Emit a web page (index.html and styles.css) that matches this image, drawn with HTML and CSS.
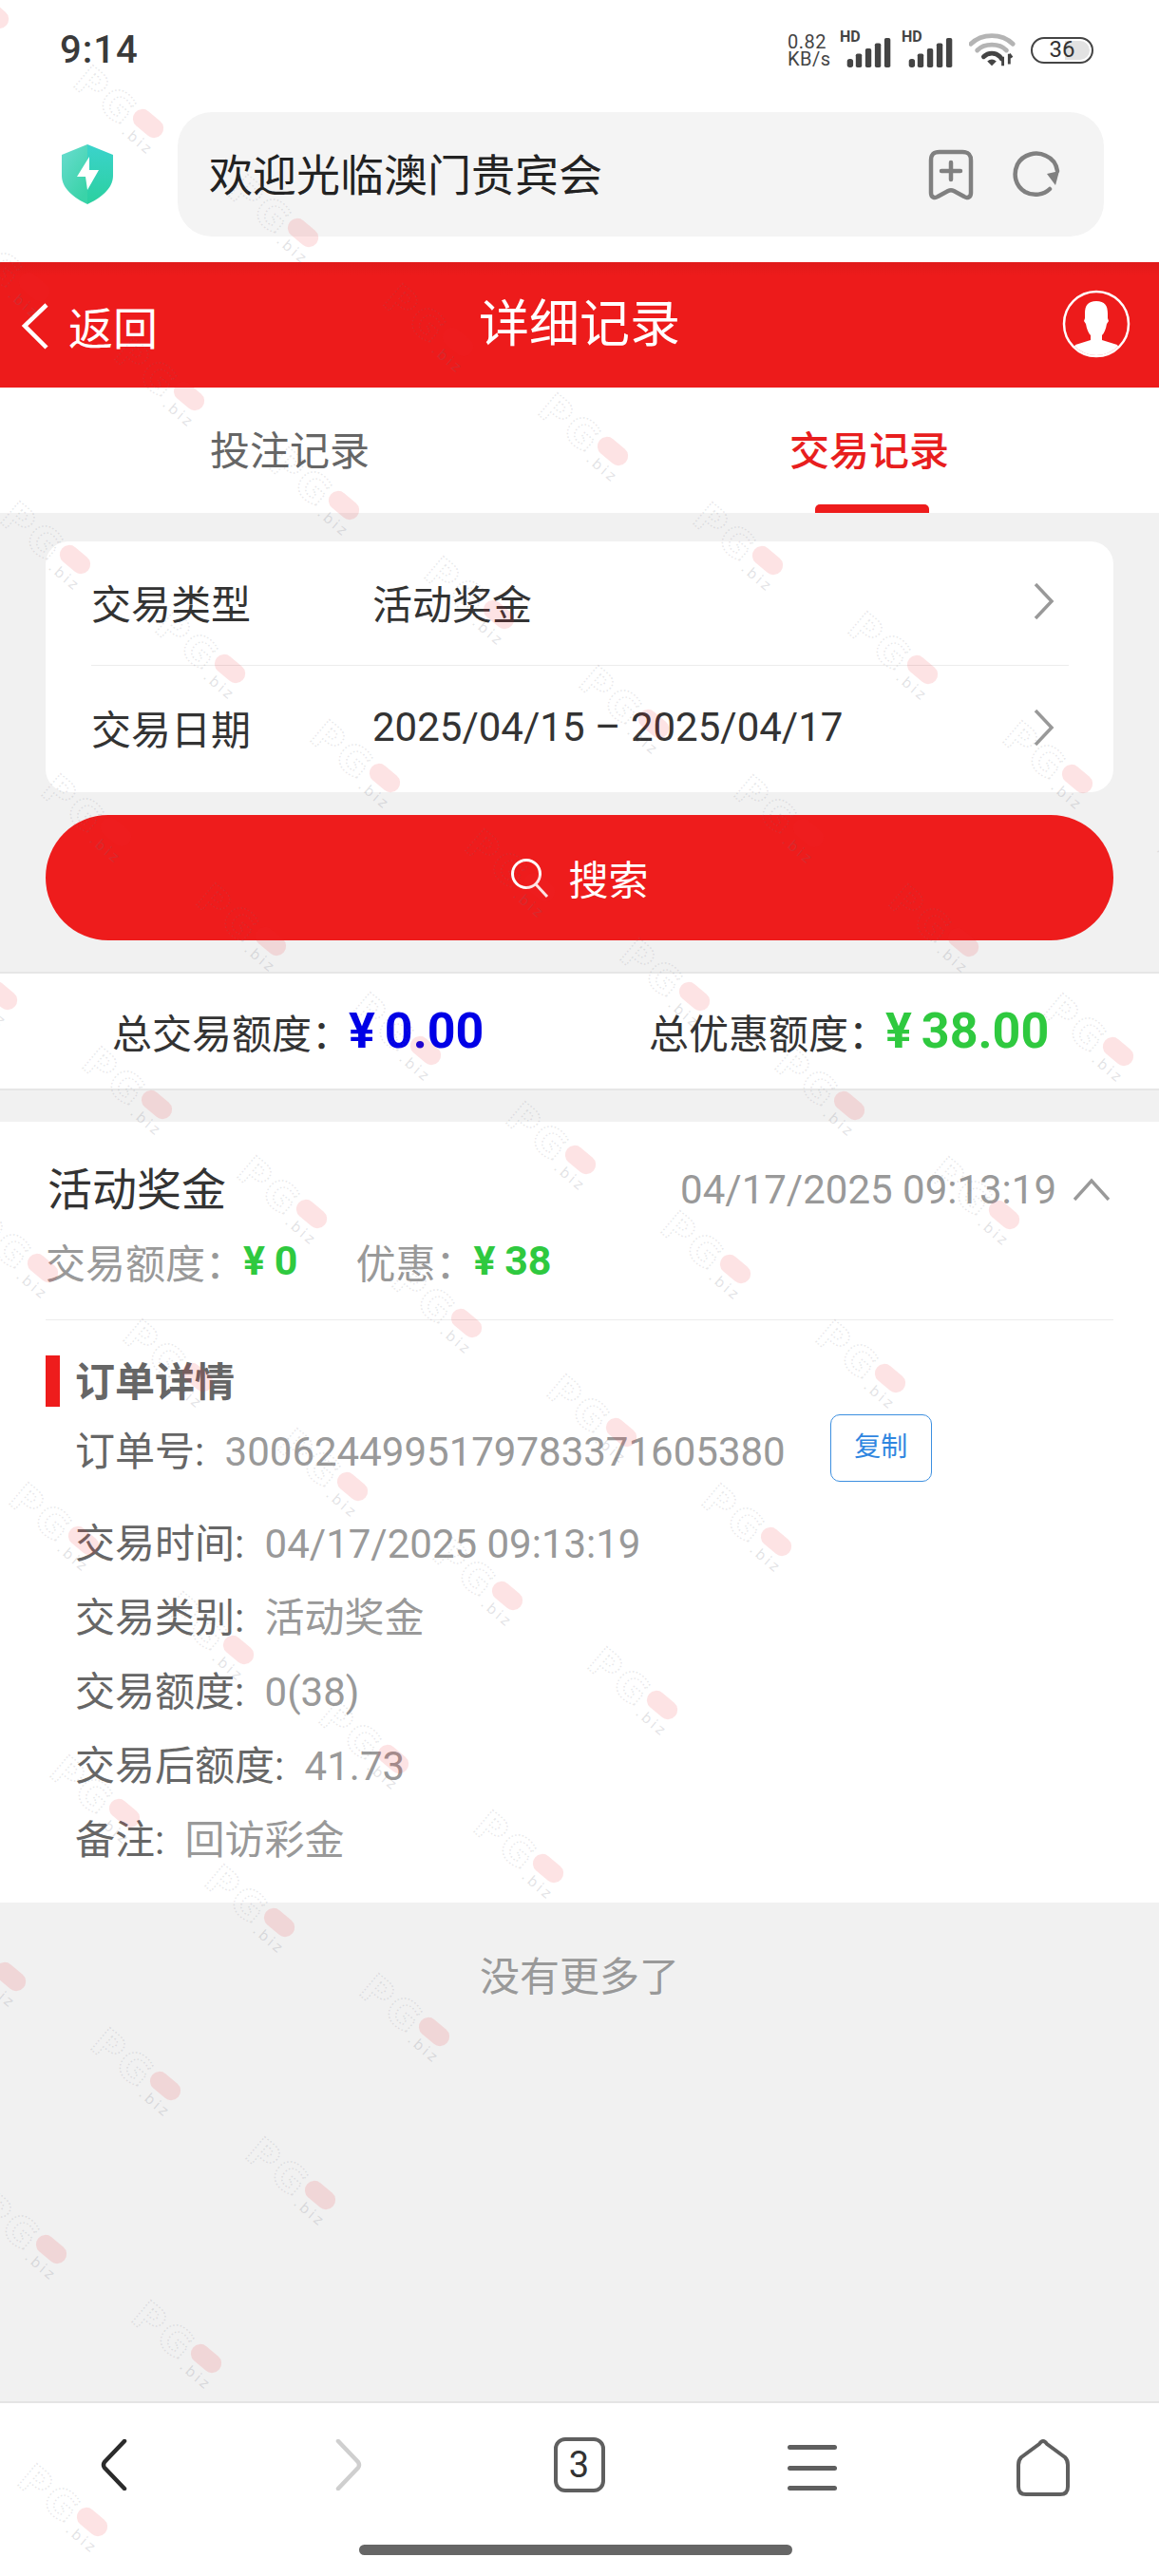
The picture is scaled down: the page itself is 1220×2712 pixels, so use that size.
FILE: index.html
```html
<!DOCTYPE html>
<html lang="zh-CN">
<head>
  <meta charset="UTF-8" />
  <meta name="viewport" content="width=device-width, initial-scale=1.0"/>
  <title>详细记录</title>
  <link rel="stylesheet" href="styles.css">
</head>
<body>
  <div class="screen">

    <!-- phone status bar -->
    <div class="statusbar">
      <span class="clock">9:14</span>
      <div class="status-icons">
        <span class="speed">0.82<br>KB/s</span>
        <div class="signal">
          <span class="hd">HD</span>
          <svg width="49" height="31" viewBox="0 0 50 34"><g fill="#444"><rect x="0" y="24" width="7" height="10" rx="3"/><rect x="10" y="18" width="7" height="16" rx="2"/><rect x="21" y="12" width="7" height="22" rx="2"/><rect x="32" y="6" width="7" height="28" rx="2"/><rect x="43" y="0" width="7" height="34" rx="2"/></g></svg>
        </div>
        <div class="signal">
          <span class="hd">HD</span>
          <svg width="49" height="31" viewBox="0 0 50 34"><g fill="#444"><rect x="0" y="24" width="7" height="10" rx="3"/><rect x="10" y="18" width="7" height="16" rx="2"/><rect x="21" y="12" width="7" height="22" rx="2"/><rect x="32" y="6" width="7" height="28" rx="2"/><rect x="43" y="0" width="7" height="34" rx="2"/></g></svg>
        </div>
        <svg class="wifi" width="50" height="38" viewBox="0 0 52 38">
          <g fill="none" stroke-linecap="round">
            <path d="M2 13 C14 1 36 1 48 13" stroke="#b4b4b4" stroke-width="5"/>
            <path d="M9 20 C17 12 33 12 41 20" stroke="#b4b4b4" stroke-width="5"/>
            <path d="M16 27 C21 22 29 22 34 27" stroke="#444" stroke-width="5"/>
          </g>
          <path d="M20 32 Q25 28 30 32 L25 37Z" fill="#444"/>
          <path d="M37 37 V27 M37 27 l-3 4 M44 24 V35 M44 24 l3 4" stroke="#444" stroke-width="3" fill="none"/>
        </svg>
        <div class="battery"><i class="battery-level"></i><span>36</span></div>
      </div>
    </div>

    <!-- browser address bar -->
    <div class="addressbar">
      <svg class="shield" width="54" height="63" viewBox="0 0 54 63">
        <defs>
          <linearGradient id="shieldL" x1="0" y1="0" x2="0.6" y2="1"><stop offset="0" stop-color="#6adcd0"/><stop offset="1" stop-color="#3ad3a8"/></linearGradient>
          <linearGradient id="shieldR" x1="0.5" y1="0" x2="0.5" y2="1"><stop offset="0" stop-color="#3bd3cc"/><stop offset="1" stop-color="#2bd09f"/></linearGradient>
        </defs>
        <path d="M27 0 L0 11 V33 C0 47 14 57 27 63Z" fill="url(#shieldL)"/>
        <path d="M27 0 L54 11 V33 C54 47 40 57 27 63Z" fill="url(#shieldR)"/>
        <path d="M29 13 L16 34 H25 L27 48 L39 27 H29Z" fill="#fff"/>
      </svg>
      <div class="url-pill">
        <span class="url-text">欢迎光临澳门贵宾会</span>
        <svg class="bookmark" width="48" height="54" viewBox="0 0 48 54" fill="none" stroke="#808080" stroke-width="4.5" stroke-linecap="round" stroke-linejoin="round">
          <path d="M3 12 C3 5 6 3 12 3 H36 C42 3 45 5 45 12 V46 C45 51 41 52 38 50 L27 44 C25 43 23 43 21 44 L10 50 C7 52 3 51 3 46Z"/>
          <path d="M24 14 V32 M14 23 H34"/>
        </svg>
        <svg class="refresh" width="50" height="50" viewBox="0 0 50 50" fill="none">
          <path d="M39 40 C33 46 22 48 13 43 C3 37 0 25 5 14 C11 3 25 0 35 5 C42 8 46 14 47 21" stroke="#808080" stroke-width="4.5" stroke-linecap="round"/>
          <path d="M36 24 L49 21 L45 36Z" fill="#808080"/>
        </svg>
      </div>
    </div>

    <!-- red title bar -->
    <header class="titlebar">
      <a class="back">
        <svg width="30" height="50" viewBox="0 0 30 50" fill="none" stroke="#fff" stroke-width="4.5"><path d="M27 3 L4 25 L27 48"/></svg>
        <span>返回</span>
      </a>
      <h1>详细记录</h1>
      <svg class="avatar" width="72" height="72" viewBox="0 0 72 72">
        <defs><clipPath id="avatarClip"><circle cx="36" cy="36" r="33"/></clipPath></defs>
        <circle cx="36" cy="36" r="34" fill="none" stroke="#fff" stroke-width="2.5"/>
        <path clip-path="url(#avatarClip)" fill="#fff" d="M36 12 C27 12 24 17 24 25 L24 30 L23 33 L25 36 C26 42 28 46 30 48 V53 L14 58 L6 72 H66 L58 58 L42 53 V48 C44 46 46 42 47 36 L49 33 L48 30 V25 C48 17 45 12 36 12Z"/>
      </svg>
    </header>

    <nav class="tabs">
      <a class="tab">投注记录</a>
      <a class="tab tab-on">交易记录</a>
    </nav>

    <main class="content">
      <section class="filter-card">
        <div class="filter-row">
          <span class="filter-label">交易类型</span>
          <span class="filter-value">活动奖金</span>
          <svg class="chev" width="22" height="38" viewBox="0 0 22 38" fill="none" stroke="#999" stroke-width="3.5"><path d="M2 1 L19 19 L2 37"/></svg>
        </div>
        <div class="filter-row">
          <span class="filter-label">交易日期</span>
          <span class="filter-value">2025/04/15 – 2025/04/17</span>
          <svg class="chev" width="22" height="38" viewBox="0 0 22 38" fill="none" stroke="#999" stroke-width="3.5"><path d="M2 1 L19 19 L2 37"/></svg>
        </div>
      </section>

      <button class="search-btn">
        <svg width="42" height="42" viewBox="0 0 42 42" fill="none" stroke="#fff" stroke-width="3"><circle cx="17" cy="17" r="14.5"/><path d="M27 28 L39 41"/></svg>
        <span>搜索</span>
      </button>

      <section class="summary">
        <div class="summary-item">总交易额度：<b class="blue">¥ 0.00</b></div>
        <div class="summary-item">总优惠额度：<b class="green">¥ 38.00</b></div>
      </section>

      <article class="record">
        <div class="record-head">
          <span class="record-name">活动奖金</span>
          <span class="record-date">04/17/2025 09:13:19</span>
          <svg width="38" height="24" viewBox="0 0 38 24" fill="none" stroke="#999" stroke-width="3.5"><path d="M1 23 L19 3 L37 23"/></svg>
        </div>
        <div class="record-amounts">
          <span>交易额度：<b class="green">¥ 0</b></span>
          <span>优惠：<b class="green">¥ 38</b></span>
        </div>
        <div class="record-line"></div>
        <h3 class="detail-title">订单详情</h3>
        <div class="detail-row detail-order">
          <span>订单号: <em>3006244995179783371605380</em></span>
          <a class="copy-btn">复制</a>
        </div>
        <div class="detail-row">交易时间: <em>04/17/2025 09:13:19</em></div>
        <div class="detail-row">交易类别: <em>活动奖金</em></div>
        <div class="detail-row">交易额度: <em>0(38)</em></div>
        <div class="detail-row">交易后额度: <em>41.73</em></div>
        <div class="detail-row">备注: <em>回访彩金</em></div>
      </article>

      <p class="no-more">没有更多了</p>
    </main>

    <!-- browser toolbar -->
    <footer class="toolbar">
      <div class="toolbar-icons">
        <svg width="30" height="54" viewBox="0 0 30 54" fill="none" stroke="#2b2b2b" stroke-width="4.5" stroke-linecap="round" stroke-linejoin="round"><path d="M26 2 L5 24 Q3 27 5 30 L26 52"/></svg>
        <svg class="forward" width="30" height="54" viewBox="0 0 30 54" fill="none" stroke="#cfcfcf" stroke-width="4.5" stroke-linecap="round" stroke-linejoin="round"><path d="M4 2 L25 24 Q27 27 25 30 L4 52"/></svg>
        <div class="tab-count">3</div>
        <div class="menu-lines"><i></i><i></i><i></i></div>
        <svg class="home" width="56" height="60" viewBox="0 0 56 60" fill="none" stroke="#5f5f5f" stroke-width="4" stroke-linejoin="round"><path d="M28 2 Q26 2 24 5 L5 19 Q2 22 2 27 V50 Q2 58 10 58 H46 Q54 58 54 50 V27 Q54 22 51 19 L32 5 Q30 2 28 2Z"/></svg>
      </div>
      <div class="home-handle"></div>
    </footer>

    <!-- repeated site stamp over the page, filled in by watermark.js -->
    <svg class="stamps" id="stamps" width="1220" height="2712" viewBox="0 0 1220 2712">
      <defs>
        <g id="stamp">
          <text class="stamp-pg" x="-88" y="21">PG</text>
          <rect class="stamp-pill" x="-18" y="-10" width="36" height="20" rx="10"/>
          <text class="stamp-biz" x="-16" y="26">.biz</text>
        </g>
      </defs>
    </svg>
  </div>
  <script src="watermark.js"></script>
</body>
</html>
```

FILE: styles.css
```css
html, body {
  margin: 0;
  background: #f1f1f1;
}
.screen {
  position: relative;
  width: 1220px;
  height: 2712px;
  overflow: hidden;
  display: flex;
  flex-direction: column;
  font-family: Roboto, "Noto Sans CJK SC", sans-serif;
  font-size: 42px;
  color: #333;
}
a { text-decoration: none; }
em { font-style: normal; }

/* status bar */
.statusbar {
  height: 104px;
  flex: none;
  background: #fff;
  display: flex;
  align-items: center;
  justify-content: space-between;
  padding: 0 69px 0 63px;
  box-sizing: border-box;
}
.clock {
  font-size: 40px;
  font-weight: 500;
  color: #3a3a3a;
  letter-spacing: 1px;
}
.status-icons {
  display: flex;
  align-items: flex-end;
  height: 38px;
}
.speed {
  width: 48px;
  font-size: 20px;
  line-height: 18px;
  color: #444;
  letter-spacing: 0.5px;
  margin-right: 13px;
}
.signal {
  position: relative;
  width: 49px;
  height: 38px;
  margin-right: 16px;
  display: flex;
  align-items: flex-end;
}
.hd {
  position: absolute;
  left: -6px;
  top: -1px;
  font-size: 16px;
  line-height: 14px;
  font-weight: 700;
  color: #444;
}
.wifi { margin-right: 15px; }
.battery {
  position: relative;
  width: 66px;
  height: 28px;
  box-sizing: border-box;
  border: 2.5px solid #444;
  border-radius: 14px;
  font-size: 24px;
  line-height: 23px;
  text-align: center;
  color: #333;
  overflow: hidden;
  margin-bottom: 4px;
}
.battery-level {
  position: absolute;
  right: 2px;
  top: 2px;
  bottom: 2px;
  width: 26px;
  background: #e2e2e2;
  border-radius: 0 10px 10px 0;
}
.battery span { position: relative; }

/* address bar */
.addressbar {
  height: 172px;
  flex: none;
  background: #fff;
  box-sizing: border-box;
  padding: 14px 58px 27px 65px;
  display: flex;
  align-items: center;
}
.shield { flex: none; margin-right: 68px; }
.url-pill {
  flex: 1;
  height: 131px;
  background: #f4f4f4;
  border-radius: 36px;
  display: flex;
  align-items: center;
  padding: 0 46px 0 33px;
}
.url-text {
  flex: 1;
  font-size: 46px;
  color: #222;
  padding-bottom: 5px;
}
.bookmark { margin-right: 41px; }

/* title bar */
.titlebar {
  position: relative;
  height: 132px;
  flex: none;
  background: linear-gradient(#e01a1a, #ed1b1b 14px);
  display: flex;
  align-items: center;
  justify-content: center;
  color: #fff;
}
.titlebar h1 {
  margin: 0;
  font-size: 53px;
  font-weight: 400;
  line-height: 128px;
}
.back {
  position: absolute;
  left: 22px;
  top: 32px;
  display: flex;
  align-items: center;
  gap: 20px;
  color: #fff;
  font-size: 47px;
}
.avatar {
  position: absolute;
  right: 30px;
  top: 29px;
}

/* tabs */
.tabs {
  height: 132px;
  flex: none;
  background: #fff;
  display: flex;
}
.tab {
  flex: 1;
  position: relative;
  text-align: center;
  line-height: 136px;
  color: #666;
}
.tab-on {
  color: #e81e1e;
  font-weight: 500;
}
.tab-on::after {
  content: '';
  position: absolute;
  left: 248px;
  bottom: 0;
  width: 120px;
  height: 9px;
  background: #ee1c1c;
  border-radius: 5px 5px 0 0;
}

.content {
  flex: 1;
  display: flex;
  flex-direction: column;
  padding-top: 30px;
  background: #f1f1f1;
}

/* filter card */
.filter-card {
  margin: 0 48px;
  background: #fff;
  border-radius: 24px;
  padding: 0 47px 0 48px;
}
.filter-row {
  height: 130px;
  box-sizing: border-box;
  padding-bottom: 4px;
  display: flex;
  align-items: center;
  color: #333;
}
.filter-row + .filter-row {
  height: 134px;
  border-top: 1px solid #ececec;
}
.filter-label { width: 296px; }
.filter-value { flex: 1; }
.chev { margin-right: 15px; }

.search-btn {
  margin: 24px 48px 0;
  height: 132px;
  padding-bottom: 2px;
  border: none;
  border-radius: 66px;
  background: #ee1c1c;
  color: #fff;
  font: inherit;
  display: flex;
  align-items: center;
  justify-content: center;
  gap: 19px;
}

/* totals */
.summary {
  margin-top: 33px;
  height: 125px;
  box-sizing: border-box;
  background: #fff;
  border-top: 2px solid #e6e6e6;
  border-bottom: 2px solid #e6e6e6;
  display: flex;
  align-items: center;
  padding: 0 0 0 118px;
  color: #333;
}
.summary-item { display: flex; align-items: center; }
.summary-item:first-child { width: 565px; }
.summary b {
  font-size: 52px;
  font-weight: 700;
  margin-left: -3px;
  word-spacing: -3px;
}
.blue { color: #0000e6; }
.green { color: #2fc93f; }

/* record */
.record {
  margin-top: 33px;
  height: 822px;
  box-sizing: border-box;
  background: #fff;
  padding: 0 48px;
}
.record-head {
  height: 142px;
  display: flex;
  align-items: center;
}
.record-name {
  flex: 1;
  font-size: 47px;
  margin-left: 2px;
  padding-bottom: 8px;
}
.record-date { color: #999; margin-right: 18px; }
.record-head svg { margin-right: 4px; }
.record-amounts {
  height: 64px;
  margin-top: -28px;
  display: flex;
  align-items: center;
  gap: 61px;
  color: #999;
}
.record-amounts span { display: flex; align-items: center; }
.record-amounts b {
  font-size: 43px;
  font-weight: 700;
  margin-left: -2px;
  word-spacing: -1px;
}
.record-line {
  height: 1px;
  margin-top: 30px;
  background: #ececec;
}
.detail-title {
  margin: 37px 0 0;
  height: 54px;
  border-left: 15px solid #ee1c1c;
  padding-left: 16px;
  font-size: 42px;
  font-weight: 700;
  line-height: 58px;
  color: #666;
}
.detail-row {
  height: 78px;
  line-height: 78px;
  padding-left: 31px;
  color: #666;
  white-space: nowrap;
}
.detail-row em { color: #999; margin-left: 11px; }
.detail-order {
  margin: 13px 0 23px;
  height: 70px;
  line-height: 70px;
  display: flex;
  align-items: center;
}
.copy-btn {
  margin-left: 47px;
  width: 105px;
  height: 69px;
  margin-top: -10px;
  border: 1.5px solid #3c8fe0;
  border-radius: 10px;
  font-size: 28px;
  line-height: 67px;
  text-align: center;
  color: #2f86e0;
}
.no-more {
  margin: 49px 0 0;
  text-align: center;
  line-height: 60px;
  color: #999;
}

/* browser toolbar */
.toolbar {
  height: 184px;
  flex: none;
  box-sizing: border-box;
  background: #fff;
  border-top: 2px solid #e4e4e4;
}
.toolbar-icons {
  height: 110px;
  margin-left: -3px;
  padding-top: 38px;
  box-sizing: border-box;
  display: grid;
  grid-template-columns: repeat(5, 245px);
  justify-items: center;
  align-items: start;
}
.forward { margin-left: 5px; }
.home { margin-right: 4px; }
.tab-count {
  width: 54px;
  height: 58px;
  margin-top: -2px;
  box-sizing: border-box;
  border: 4px solid #5f5f5f;
  border-radius: 12px;
  text-align: center;
  font-size: 38px;
  line-height: 50px;
  color: #333;
}
.menu-lines {
  width: 52px;
  height: 48px;
  margin-top: 6px;
  display: flex;
  flex-direction: column;
  justify-content: space-between;
}
.menu-lines i {
  height: 5px;
  background: #5f5f5f;
  border-radius: 3px;
}
.home-handle {
  width: 456px;
  height: 11px;
  margin: 39px 0 0 378px;
  background: #666;
  border-radius: 6px;
}

/* stamps lying over everything */
.stamps {
  position: absolute;
  left: 0;
  top: 0;
  pointer-events: none;
}
.stamp-pg {
  font-family: "DejaVu Sans", sans-serif;
  font-size: 42px;
  font-weight: 700;
  letter-spacing: 3px;
  fill: none;
  stroke: rgba(110, 110, 125, 0.17);
  stroke-width: 1.6;
  stroke-dasharray: 1.6 2.2;
}
.stamp-pill { fill: rgba(238, 40, 50, 0.13); }
.stamp-biz {
  font-family: "DejaVu Sans", sans-serif;
  font-size: 15px;
  fill: rgba(110, 110, 125, 0.2);
  letter-spacing: 3px;
}
```

FILE: watermark.js
```js
// lay the stamp out on its slanted lattice; the band stops at m + n = 7
const stamps = document.getElementById('stamps');
const NS = 'http://www.w3.org/2000/svg';

for (let n = 0; n <= 10; n++) {
  for (let m = -8; m + n <= 7; m++) {
    const x = 156 + 163 * m + 43 * n;
    const y = 130 + 115 * m + 287 * n;
    if (x < -60 || x > 1300 || y < -60 || y > 2780) continue;
    const use = document.createElementNS(NS, 'use');
    use.setAttribute('href', '#stamp');
    use.setAttribute('transform', `translate(${x} ${y}) rotate(40)`);
    stamps.appendChild(use);
  }
}
```
